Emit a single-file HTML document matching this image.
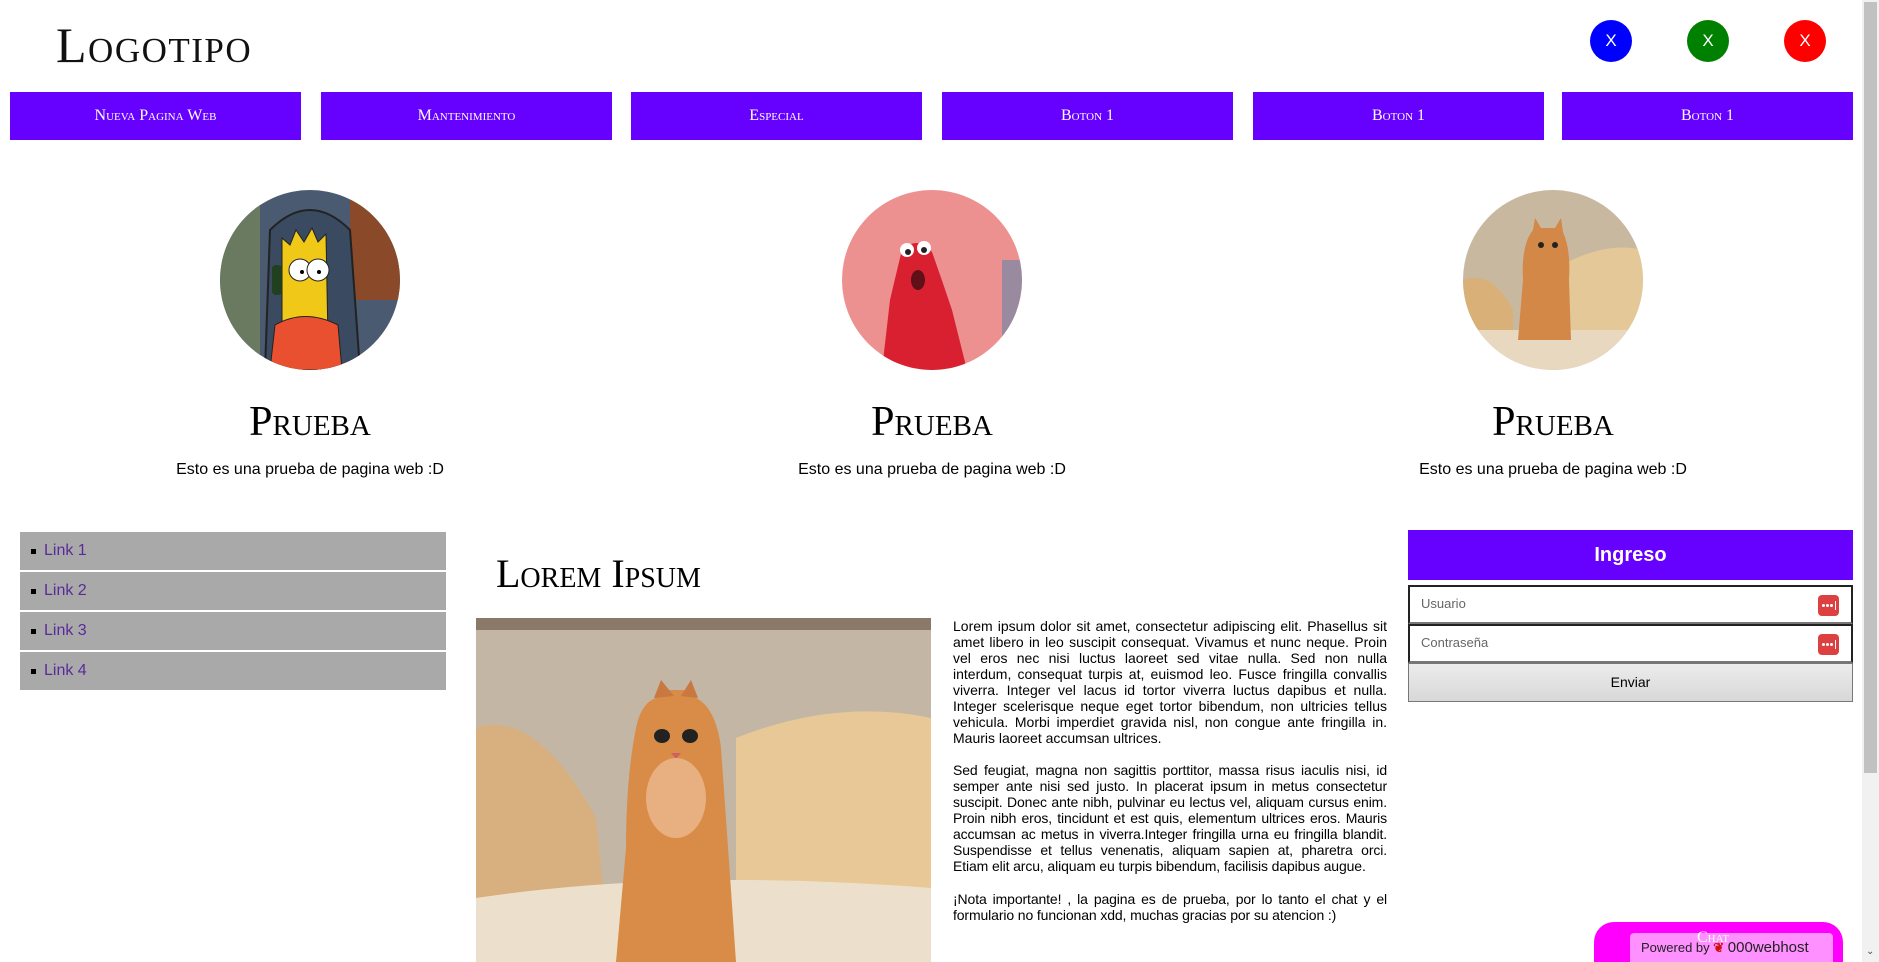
<!DOCTYPE html>
<html><head><meta charset="utf-8"><style>
*{margin:0;padding:0;box-sizing:border-box}
html,body{width:1879px;height:962px;overflow:hidden;background:#fff}
body{position:relative;font-family:"Liberation Sans",Arial,sans-serif;color:#000}
.abs{position:absolute}
.sc{font-family:"Liberation Serif",serif;font-variant:small-caps}
.logo{left:56px;top:16px;font-size:50px;font-weight:normal;letter-spacing:1.5px;color:#111}
.x{width:42px;height:42px;border-radius:50%;color:#fff;font-size:17px;line-height:42px;text-align:center;top:20px}
.nav{top:92px;height:48px;width:291px;background:#6600ff;color:#fff;text-align:center;line-height:48px;font-size:16px}
.circ{width:180px;height:180px;border-radius:50%;overflow:hidden;top:190px}
.pr{top:398px;width:400px;text-align:center;font-size:42px}
.ds{top:461px;width:400px;text-align:center;font-size:16px}
.side{left:20px;width:426px;height:38px;background:#a9a9a9;font-size:16px;color:#5a2a9a;line-height:38px;padding-left:24px}
.side:before{content:"";position:absolute;left:11px;top:17px;width:5px;height:5px;background:#000}
.txt{left:953px;width:434px;font-size:14px;line-height:16px;text-align:justify;letter-spacing:-0.12px}
.fld{left:1408px;width:445px;height:39px;border:2px solid;border-color:#222 #222 #777 #222;font-size:13px;color:#666;padding-left:11px;line-height:34px}
.key{position:absolute;right:12px;top:8px;width:21px;height:21px;border-radius:4px;background:#dd4040}
.key i{position:absolute;top:9px;width:3px;height:3px;border-radius:50%;background:#fff}
.key b{position:absolute;left:17px;top:6px;width:1px;height:9px;background:#fff}
</style></head><body>
<div class="abs sc logo">Logotipo</div>
<div class="abs x" style="left:1590px;background:#0000ff">X</div>
<div class="abs x" style="left:1687px;background:#008000">X</div>
<div class="abs x" style="left:1784px;background:#ff0000">X</div>

<div class="abs nav sc" style="left:10px">Nueva Pagina Web</div>
<div class="abs nav sc" style="left:321px">Mantenimiento</div>
<div class="abs nav sc" style="left:631px">Especial</div>
<div class="abs nav sc" style="left:942px">Boton 1</div>
<div class="abs nav sc" style="left:1253px">Boton 1</div>
<div class="abs nav sc" style="left:1562px">Boton 1</div>

<div class="abs circ" style="left:220px">
<svg width="180" height="180"><rect width="180" height="180" fill="#4a5a70"/><rect x="0" y="0" width="40" height="180" fill="#6a7a60"/><rect x="130" y="0" width="50" height="110" fill="#8a4a2a"/><path d="M45 180 L50 40 Q90 0 130 40 L140 180Z" fill="#3a4a60" stroke="#222" stroke-width="2"/><path d="M62 150 L62 48 L70 55 L76 40 L84 52 L92 38 L98 52 L106 44 L108 150Z" fill="#f0c818" stroke="#222"/><circle cx="80" cy="80" r="11" fill="#fff" stroke="#222"/><circle cx="98" cy="80" r="11" fill="#fff" stroke="#222"/><circle cx="82" cy="82" r="2"/><circle cx="99" cy="82" r="2"/><path d="M50 180 L55 135 Q85 118 118 135 L122 180Z" fill="#e85030" stroke="#222"/><rect x="52" y="75" width="10" height="30" rx="4" fill="#204020"/></svg></div>
<div class="abs circ" style="left:842px">
<svg width="180" height="180"><rect width="180" height="180" fill="#ec9090"/><rect x="160" y="70" width="20" height="110" fill="#9a8aa0"/><path d="M40 180 L48 110 Q55 80 60 60 Q75 45 90 62 Q100 90 110 120 L125 180Z" fill="#d82030"/><circle cx="65" cy="60" r="7" fill="#fff"/><circle cx="82" cy="58" r="7" fill="#fff"/><circle cx="66" cy="62" r="3" fill="#222"/><circle cx="82" cy="60" r="3" fill="#222"/><ellipse cx="76" cy="90" rx="7" ry="10" fill="#601018"/></svg></div>
<div class="abs circ" style="left:1463px">
<svg width="180" height="180"><rect width="180" height="180" fill="#c8b8a0"/><path d="M90 80 Q140 50 180 60 L180 150 L90 150Z" fill="#e4c898"/><path d="M0 90 Q30 80 50 120 L50 150 L0 150Z" fill="#d8b078"/><rect x="0" y="140" width="180" height="40" fill="#e8d8c0"/><path d="M55 150 L60 90 Q58 55 70 40 L72 28 L78 38 L92 38 L98 28 L100 42 Q108 60 106 90 L108 150Z" fill="#d48848"/><circle cx="78" cy="55" r="3" fill="#222"/><circle cx="92" cy="55" r="3" fill="#222"/></svg></div>

<div class="abs sc pr" style="left:110px">Prueba</div>
<div class="abs sc pr" style="left:732px">Prueba</div>
<div class="abs sc pr" style="left:1353px">Prueba</div>
<div class="abs ds" style="left:110px">Esto es una prueba de pagina web :D</div>
<div class="abs ds" style="left:732px">Esto es una prueba de pagina web :D</div>
<div class="abs ds" style="left:1353px">Esto es una prueba de pagina web :D</div>

<div class="abs side" style="top:532px">Link 1</div>
<div class="abs side" style="top:572px">Link 2</div>
<div class="abs side" style="top:612px">Link 3</div>
<div class="abs side" style="top:652px">Link 4</div>

<div class="abs sc" style="left:496px;top:550px;font-size:40px">Lorem Ipsum</div>
<div class="abs" style="left:476px;top:618px;width:455px;height:344px;overflow:hidden">
<svg width="455" height="344"><rect width="455" height="344" fill="#c4b6a4"/><rect y="0" width="455" height="12" fill="#8a7868"/><path d="M0 110 Q60 90 120 200 L130 300 L0 300Z" fill="#d8b080"/><path d="M260 120 Q360 80 455 100 L455 290 L260 290Z" fill="#e8c896"/><path d="M0 280 Q200 250 455 270 L455 344 L0 344Z" fill="#ece0cc"/><path d="M140 344 L150 230 Q150 160 160 110 Q165 85 180 80 L185 72 L215 72 L220 80 Q240 90 245 130 Q250 200 260 344Z" fill="#d88c48"/><path d="M178 80 L185 62 L198 78Z" fill="#c87840"/><path d="M222 80 L215 62 L205 78Z" fill="#c87840"/><ellipse cx="186" cy="118" rx="8" ry="7" fill="#222"/><ellipse cx="214" cy="118" rx="8" ry="7" fill="#222"/><path d="M195 135 L205 135 L200 141Z" fill="#d06060"/><ellipse cx="200" cy="180" rx="30" ry="40" fill="#e8b080"/></svg></div>

<div class="abs txt" style="top:618px;letter-spacing:0">Lorem ipsum dolor sit amet, consectetur adipiscing elit. Phasellus sit amet libero in leo suscipit consequat. Vivamus et nunc neque. Proin vel eros nec nisi luctus laoreet sed vitae nulla. Sed non nulla interdum, consequat turpis at, euismod leo. Fusce fringilla convallis viverra. Integer vel lacus id tortor viverra luctus dapibus et nulla. Integer scelerisque neque eget tortor bibendum, non ultricies tellus vehicula. Morbi imperdiet gravida nisl, non congue ante fringilla in. Mauris laoreet accumsan ultrices.</div>
<div class="abs txt" style="top:762px">Sed feugiat, magna non sagittis porttitor, massa risus iaculis nisi, id semper ante nisi sed justo. In placerat ipsum in metus consectetur suscipit. Donec ante nibh, pulvinar eu lectus vel, aliquam cursus enim. Proin nibh eros, tincidunt et est quis, elementum ultrices eros. Mauris accumsan ac metus in viverra.Integer fringilla urna eu fringilla blandit. Suspendisse et tellus venenatis, aliquam sapien at, pharetra orci. Etiam elit arcu, aliquam eu turpis bibendum, facilisis dapibus augue.</div>
<div class="abs txt" style="top:891px">¡Nota importante! , la pagina es de prueba, por lo tanto el chat y el formulario no funcionan xdd, muchas gracias por su atencion :)</div>

<div class="abs" style="left:1408px;top:530px;width:445px;height:50px;background:#6600ff;color:#fff;font-weight:bold;font-size:20px;text-align:center;line-height:50px">Ingreso</div>
<div class="abs fld" style="top:585px">Usuario<div class="key"><i style="left:4px"></i><i style="left:8px"></i><i style="left:12px"></i><b></b></div></div>
<div class="abs fld" style="top:624px">Contraseña<div class="key"><i style="left:4px"></i><i style="left:8px"></i><i style="left:12px"></i><b></b></div></div>
<div class="abs" style="left:1408px;top:663px;width:445px;height:39px;border:1px solid #777;background:linear-gradient(#ececec,#d8d8d8);font-size:14px;text-align:center;line-height:37px">Enviar</div>

<div class="abs" style="left:1594px;top:922px;width:249px;height:50px;background:#ff00ff;border-radius:20px 20px 0 0"></div>
<div class="abs" style="left:1630px;top:933px;width:203px;height:40px;background:#ff90ff;border-radius:4px;font-size:13px;line-height:30px;padding-left:11px;color:#222">Powered by <span style="color:#d01010;font-weight:bold">❦</span> <span style="font-size:15px">000webhost</span></div>
<div class="abs" style="left:1697px;top:929px;color:#fff;font-family:'Liberation Serif',serif;font-variant:small-caps;font-size:16px">Chat</div>

<div class="abs" style="left:1862px;top:0;width:17px;height:962px;background:#f1f1f1"></div>
<div class="abs" style="left:1864px;top:2px;width:13px;height:771px;background:#c1c1c1"></div>
<div class="abs" style="left:1866px;top:946px;font-size:10px;color:#505050">⌄</div>
</body></html>
